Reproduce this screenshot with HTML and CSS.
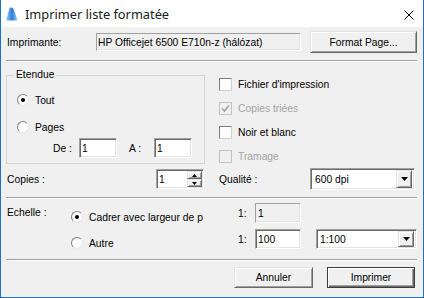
FILE: index.html
```html
<!DOCTYPE html>
<html lang="fr">
<head>
    <meta charset="UTF-8">
    <title>Imprimer liste formatée</title>
    <link rel="stylesheet" href="styles.css">
</head>
<body>

<div class="window">
    <div class="titlebar">
        <svg class="app-icon" viewBox="0 0 13 14">
            <defs>
                <linearGradient id="sail" x1="0" y1="0" x2="1" y2="0">
                    <stop offset="0" stop-color="#9fd0ff"/>
                    <stop offset="0.5" stop-color="#2f7ede"/>
                    <stop offset="1" stop-color="#8cc4fb"/>
                </linearGradient>
            </defs>
            <path d="M1 13.5 L4.5 1 C6.5 0 8 0.5 9 3 L12.5 13.5 Z" fill="url(#sail)"/>
        </svg>
        <span class="title">Imprimer liste formatée</span>
        <svg class="close" viewBox="0 0 10 10">
            <path d="M0.5 0.5 L9.5 9.5 M9.5 0.5 L0.5 9.5" stroke="#000" stroke-width="1" fill="none"/>
        </svg>
    </div>

    <div class="content">
        <!-- printer -->
        <div class="printer-row">
            <span class="printer-lbl">Imprimante:</span>
            <div class="field readonly printer-field">HP Officejet 6500 E710n-z (hálózat)</div>
            <div class="btn format-btn">Format Page...</div>
        </div>
        <div class="sep first"></div>

        <div class="mid">
            <div class="col-left">
                <div class="group">
                    <span class="group-title">Etendue</span>
                    <div class="radio-row tout"><span class="radio on"></span>Tout</div>
                    <div class="radio-row pages"><span class="radio"></span>Pages</div>
                    <div class="range-row">
                        <span class="range-lbl">De :</span>
                        <div class="field range-field">1</div>
                        <span class="range-lbl to">A :</span>
                        <div class="field range-field">1</div>
                    </div>
                </div>
                <div class="copies-row">
                    <span class="copies-lbl">Copies :</span>
                    <div class="field spinner">
                        <span class="spin-value">1</span>
                        <div class="spin-btns">
                            <div class="spin-btn">
                                <svg width="5" height="3" viewBox="0 0 5 3"><path d="M2.5 0 L5 3 L0 3 Z" fill="#000"/></svg>
                            </div>
                            <div class="spin-btn">
                                <svg width="5" height="3" viewBox="0 0 5 3"><path d="M0 0 L5 0 L2.5 3 Z" fill="#000"/></svg>
                            </div>
                        </div>
                    </div>
                </div>
            </div>

            <div class="col-right">
                <div class="check-row"><span class="check"></span>Fichier d'impression</div>
                <div class="check-row disabled">
                    <span class="check">
                        <svg width="11" height="11" viewBox="0 0 11 11"><path d="M2 5.5 L4.5 8 L9 2.5" stroke="#a0a0a0" stroke-width="1.6" fill="none"/></svg>
                    </span>Copies triées
                </div>
                <div class="check-row"><span class="check"></span>Noir et blanc</div>
                <div class="check-row disabled"><span class="check"></span>Tramage</div>
                <div class="quality-row">
                    <span class="quality-lbl">Qualité :</span>
                    <div class="field combo quality">
                        <span>600 dpi</span>
                        <div class="combo-btn">
                            <svg width="7" height="4" viewBox="0 0 7 4"><path d="M0 0 L7 0 L3.5 4 Z" fill="#000"/></svg>
                        </div>
                    </div>
                </div>
            </div>
        </div>
        <div class="sep"></div>

        <!-- scale -->
        <div class="scale">
            <span class="scale-lbl">Echelle :</span>
            <div class="scale-radios">
                <div class="radio-row"><span class="radio on"></span>Cadrer avec largeur de p</div>
                <div class="radio-row autre"><span class="radio"></span>Autre</div>
            </div>
            <div class="scale-fields">
                <div class="ratio-row">
                    <span class="ratio-lbl">1:</span>
                    <div class="field readonly ratio-field">1</div>
                </div>
                <div class="ratio-row second">
                    <span class="ratio-lbl">1:</span>
                    <div class="field ratio-field">100</div>
                    <div class="field combo ratio-combo">
                        <span>1:100</span>
                        <div class="combo-btn">
                            <svg width="7" height="4" viewBox="0 0 7 4"><path d="M0 0 L7 0 L3.5 4 Z" fill="#000"/></svg>
                        </div>
                    </div>
                </div>
            </div>
        </div>
        <div class="sep"></div>

        <div class="actions">
            <div class="btn cancel-btn">Annuler</div>
            <div class="btn default print-btn">Imprimer</div>
        </div>
    </div>
</div>

</body>
</html>
```

FILE: styles.css
```css
body {
    margin: 0;
    font-family: "Liberation Sans", Arial, sans-serif;
    font-size: 10.3px;
    color: #000;
}
.window {
    width: 424px;
    height: 298px;
    box-sizing: border-box;
    border: 1px solid #1a73c5;
    border-top: none;
    background: #f0f0f0;
    display: flex;
    flex-direction: column;
}
.titlebar {
    flex: none;
    height: 27px;
    background: #fff;
    display: flex;
    align-items: center;
}
.app-icon {
    width: 13px;
    height: 14px;
    margin-left: 4px;
    margin-right: 7px;
}
.title {
    flex: 1;
    font-family: "Noto Sans", sans-serif;
    font-size: 12.8px;
    color: #1a1a1a;
}
.close {
    width: 10px;
    height: 10px;
    margin: 2px 9px 0 0;
}
.content {
    flex: 1;
    padding: 0 6px 0 5px;
    display: flex;
    flex-direction: column;
}

/* shared controls */
.sep {
    flex: none;
    border-top: 1px solid #a0a0a0;
    border-bottom: 1px solid #fff;
}
.sep.first {
    margin-top: 7px;
}
.field {
    box-sizing: border-box;
    height: 20px;
    background: #fff;
    border: 1px solid;
    border-color: #a0a0a0 #fff #fff #a0a0a0;
    box-shadow: inset 1px 1px #696969, inset -1px -1px #e3e3e3;
    padding-left: 2px;
    display: flex;
    align-items: center;
    white-space: nowrap;
    overflow: hidden;
}
.field.readonly {
    background: #f0f0f0;
    box-shadow: inset -1px -1px #e3e3e3;
    border-color: #a0a0a0 #fff #fff #a0a0a0;
}
.btn {
    box-sizing: border-box;
    display: flex;
    align-items: center;
    justify-content: center;
    background: #f0f0f0;
    border: 1px solid;
    border-color: #e3e3e3 #696969 #696969 #e3e3e3;
    box-shadow: inset 1px 1px #fff, inset -1px -1px #a0a0a0;
}
.btn.default {
    border-color: #3c3c3c;
    box-shadow: inset 1px 1px #fff, inset -1px -1px #696969, inset -2px -2px #a0a0a0;
}
.combo {
    justify-content: space-between;
    padding-left: 4px;
    padding-right: 2px;
}
.combo-btn {
    box-sizing: border-box;
    width: 16px;
    height: calc(100% - 2px);
    display: flex;
    align-items: center;
    justify-content: center;
    background: #f0f0f0;
    border: 1px solid;
    border-color: #e3e3e3 #696969 #696969 #e3e3e3;
    box-shadow: inset 1px 1px #fff, inset -1px -1px #a0a0a0;
}
.radio-row {
    display: flex;
    align-items: center;
    height: 20px;
    white-space: nowrap;
}
.radio {
    flex: none;
    box-sizing: border-box;
    width: 12px;
    height: 12px;
    margin-right: 6px;
    border-radius: 50%;
    border: 1px solid;
    border-color: #7f7f7f #e6e6e6 #e6e6e6 #7f7f7f;
    background: #fff;
    display: flex;
    align-items: center;
    justify-content: center;
}
.radio.on::after {
    content: "";
    width: 4px;
    height: 4px;
    border-radius: 50%;
    background: #000;
}
.check-row {
    display: flex;
    align-items: center;
    height: 24px;
}
.check {
    flex: none;
    box-sizing: border-box;
    width: 13px;
    height: 13px;
    margin-right: 6px;
    border: 1px solid;
    border-color: #7a7a7a #cfcfcf #cfcfcf #7a7a7a;
    background: #fff;
    display: flex;
}
.check-row.disabled {
    color: #a3a3a3;
}
.check-row.disabled .check {
    border-color: #c2c2c2;
    background: #f0f0f0;
}

/* printer row */
.printer-row {
    display: flex;
    align-items: center;
    height: 22px;
    margin-top: 4px;
}
.printer-lbl {
    width: 89px;
    padding-left: 1px;
}
.printer-field {
    width: 205px;
    height: 18px;
    padding-left: 1px;
}
.format-btn {
    width: 107px;
    height: 22px;
    margin-left: 9px;
}

/* middle */
.mid {
    display: flex;
    height: 135px;
}
.col-left {
    width: 199px;
}
.group {
    box-sizing: border-box;
    height: 89px;
    margin-top: 13px;
    border: 1px solid #d5d5d5;
}
.group-title {
    display: block;
    width: fit-content;
    margin: -7px 0 0 7px;
    padding: 0 2px;
    line-height: 12px;
    background: #f0f0f0;
}
.group .radio-row {
    padding-left: 10px;
}
.radio-row.tout {
    margin-top: 9px;
}
.radio-row.pages {
    margin-top: 7px;
}
.range-row {
    display: flex;
    align-items: center;
    height: 20px;
    margin-top: 1px;
    padding-left: 46px;
}
.range-lbl {
    width: 26px;
}
.range-lbl.to {
    width: 25px;
    margin-left: 12px;
}
.range-field {
    width: 38px;
}
.copies-row {
    display: flex;
    align-items: center;
    height: 20px;
    margin-top: 5px;
}
.copies-lbl {
    padding-left: 1px;
}
.spinner {
    width: 48px;
    margin-left: auto;
    margin-right: 1px;
    padding-right: 1px;
}
.spin-value {
    flex: 1;
}
.spin-btns {
    display: flex;
    flex-direction: column;
    width: 15px;
    height: 16px;
}
.spin-btn {
    box-sizing: border-box;
    flex: 1;
    display: flex;
    align-items: center;
    justify-content: center;
    background: #f0f0f0;
    border: 1px solid;
    border-color: #e3e3e3 #696969 #696969 #e3e3e3;
    box-shadow: inset 1px 1px #fff, inset -1px -1px #a0a0a0;
}
.col-right {
    width: 198px;
    margin-left: 14px;
    padding-top: 10px;
}
.quality-row {
    display: flex;
    align-items: center;
    height: 22px;
}
.quality-lbl {
    width: 91px;
}
.quality {
    width: 105px;
    height: 22px;
}

/* scale */
.scale {
    display: flex;
    height: 60px;
}
.scale-lbl {
    width: 64px;
    padding: 8px 0 0 1px;
    line-height: 12px;
}
.scale-radios {
    width: 137px;
    padding-top: 8px;
}
.radio-row.autre {
    margin-top: 6px;
}
.scale-fields {
    margin-left: 30px;
    padding-top: 4px;
}
.ratio-row {
    display: flex;
    align-items: center;
    height: 20px;
}
.ratio-row.second {
    margin-top: 6px;
}
.ratio-lbl {
    width: 17px;
}
.ratio-field {
    width: 46px;
}
.ratio-combo {
    width: 101px;
    margin-left: 15px;
    padding-left: 3px;
}

/* buttons */
.actions {
    display: flex;
    justify-content: flex-end;
    gap: 14px;
    margin-top: 6px;
    padding-right: 2px;
}
.cancel-btn {
    width: 79px;
    height: 21px;
}
.print-btn {
    width: 88px;
    height: 21px;
}
```
